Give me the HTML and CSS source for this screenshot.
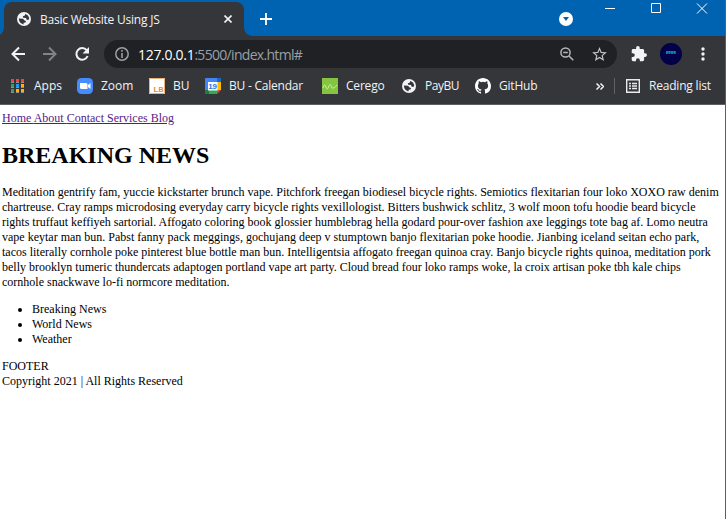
FILE: index.html
```html
<!DOCTYPE html>
<html lang="en">
<head>
<meta charset="utf-8">
<title>Basic Website Using JS</title>
<link rel="stylesheet" href="styles.css">
</head>
<body>
<svg width="0" height="0" class="defs" aria-hidden="true">
  <symbol id="globe" viewBox="0 0 14 14"><circle cx="7" cy="7" r="7" fill="#f1f3f4"/><path fill="#35363a" d="M8.300 2q3.700 1 3.900 5l-1.200 1-1.500-.5-.5-1.500-2.800-.2-.4-1.500 1.800-.5zM1.800 6.600l4.200.2 1.600 1.700 1.400.5-.5 1.500-1.800.3-.3 1.600Q2.200 11.500 1.800 6.600z"/></symbol>
</svg>
<div class="window">
  <header class="tabs">
    <div class="tab">
      <svg class="fav" width="14" height="14"><use href="#globe"/></svg>
      <span class="title">Basic Website Using JS</span>
      <svg class="close" width="8" height="8" viewBox="0 0 8 8"><path d="M.5.5l7 7m0-7l-7 7" stroke="#f1f3f4" stroke-width="1.600"/></svg>
    </div>
    <svg class="plus" width="12" height="12" viewBox="0 0 12 12"><path d="M6 0v12M0 6h12" stroke="#fff" stroke-width="1.800"/></svg>
    <svg class="search" width="14" height="14" viewBox="0 0 14 14"><circle cx="7" cy="7" r="7" fill="#fff"/><path d="M4 5h6L7 9z" fill="#0063b1"/></svg>
    <svg class="controls" width="103" height="12" viewBox="0 0 103 12"><path d="M0 5.500h10M46.500.5h9v9h-9zM92 .5l10 10m0-10l-10 10" fill="none" stroke="#fff"/></svg>
  </header>
  <div class="toolbar">
    <svg class="nav" width="80" height="16" viewBox="0 0 80 16"><g fill="none" stroke-width="2"><path stroke="#f1f3f4" d="M14 8H1.500M8 1.500L1.500 8 8 14.500"/><path stroke="#828386" d="M32 8h12.500M38 1.500L44.500 8 38 14.500"/><path stroke="#f1f3f4" d="M75.700 4.200A5.800 5.800 0 1 0 76.600 10"/></g><path fill="#f1f3f4" d="M78 1v6.500h-6.500z"/></svg>
    <div class="address">
      <svg width="14" height="14" viewBox="0 0 14 14"><circle cx="7" cy="7" r="6.200" fill="none" stroke="#9aa0a6" stroke-width="1.500"/><path d="M7 3v1.700M7 6v5" stroke="#9aa0a6" stroke-width="1.600"/></svg>
      <span class="url"><b>127.0.0.1</b>:5500/index.html#</span>
      <svg class="mag" width="14" height="14" viewBox="0 0 14 14"><g fill="none" stroke="#b5b6b8" stroke-width="1.500"><circle cx="5.500" cy="5.500" r="4.600"/><path d="M9 9l4.300 4.300M3.200 5.500h4.600"/></g></svg>
      <svg class="star" width="15" height="14" viewBox="2 2 20 19"><path fill="#c3c4c6" d="M22 9.240l-7.190-.62L12 2 9.190 8.630 2 9.240l5.460 4.730L5.820 21 12 17.270 18.180 21l-1.630-7.030zM12 15.400l-3.760 2.270 1-4.280-3.320-2.880 4.380-.38L12 6.100l1.710 4.040 4.380.38-3.320 2.880 1 4.280z"/></svg>
    </div>
    <svg class="puzzle" width="16" height="16" viewBox="1 1 22 22"><path fill="#f1f3f4" d="M20.500 11H19V7c0-1.100-.9-2-2-2h-4V3.500a2.500 2.500 0 0 0-5 0V5H4c-1.100 0-2 .9-2 2v3.800h1.500a2.700 2.700 0 0 1 0 5.400H2V20c0 1.100.9 2 2 2h3.800v-1.500a2.700 2.700 0 0 1 5.400 0V22H17c1.100 0 2-.9 2-2v-4h1.500a2.500 2.500 0 0 0 0-5z"/></svg>
    <svg class="avatar" width="22" height="22" viewBox="0 0 22 22"><circle cx="11" cy="11" r="11" fill="#020047"/><path d="M6 9.500h10" stroke="#087cae" stroke-width="3" stroke-dasharray="2 .6"/><path d="M8 9h7" stroke="#18a5cd" stroke-dasharray="1.500 1"/></svg>
    <svg class="dots" width="4" height="14" viewBox="0 0 4 14"><g fill="#f1f3f4"><circle cx="2" cy="2" r="1.700"/><circle cx="2" cy="7" r="1.700"/><circle cx="2" cy="12" r="1.700"/></g></svg>
  </div>
  <nav class="bookmarks">
    <a class="apps"><svg width="13" height="14" viewBox="0 0 13 14"><path fill="#f44336" d="M0 0h3v3H0zM5 0h3v3H5zM10 0h3v3h-3z"/><path fill="#2fa35a" d="M0 5h3v3H0zM0 10h3v3H0z"/><path fill="#2196f3" d="M5 5h3v3H5z"/><path fill="#ffb300" d="M10 5h3v3h-3zM5 10h3v3H5zM10 10h3v3h-3z"/><path stroke="#a6a7aa" d="M0 3.500h3m2 0h3m2 0h3M0 8.500h3m2 0h3m2 0h3M0 13.500h3m2 0h3m2 0h3" stroke-width=".8"/></svg><span>Apps</span></a>
    <a class="zoom"><svg width="16" height="16" viewBox="0 0 16 16"><rect width="16" height="16" rx="4.500" fill="#448cff"/><path fill="#fff" d="M3 5h6q1.500 0 1.500 1.500V11h-6Q3 11 3 9.500zM11 7l2.500-2v6L11 9z"/></svg><span>Zoom</span></a>
    <a class="bu"><svg width="16" height="16" viewBox="0 0 16 16"><path fill="#fff" d="M0 0h16v16H0z"/><path fill="none" stroke="#eab277" d="M.5.5h15v15H.5z"/><text x="4.500" y="14" class="lb">L<tspan class="small">B</tspan></text></svg><span>BU</span></a>
    <a class="calendar"><svg width="16" height="16" viewBox="0 0 16 16"><path fill="#4285f4" d="M1 0h14q1 0 1 1v3H4v12H1q-1 0-1-1V1q0-1 1-1z"/><path fill="#1967d2" d="M12 0h3q1 0 1 1v3h-4z"/><path fill="#fbbc04" d="M12 4h4v8h-4z"/><path fill="#188038" d="M0 12h4v4H1q-1 0-1-1z"/><path fill="#34a853" d="M4 12h8v4H4z"/><path fill="#ea4335" d="M12 12h4l-4 4z"/><path fill="#fff" d="M3 4h9.500v8.500H3z"/><text x="3.300" y="11.300" class="day">19</text></svg><span>BU - Calendar</span></a>
    <a class="cerego"><svg width="16" height="16" viewBox="0 0 16 16"><path fill="#85c441" d="M0 0h16v16H0z"/><path fill="none" stroke="#c6f59a" d="M1 10c1-4 2-4 3-1s2 2 3-1 2-1 2.500 1S12 10.500 15 7"/></svg><span>Cerego</span></a>
    <a class="pay"><svg width="14" height="14"><use href="#globe"/></svg><span>PayBU</span></a>
    <a class="github"><svg width="16" height="16" viewBox="0 0 16 16"><path fill="#fff" d="M8 0C3.580 0 0 3.580 0 8c0 3.540 2.290 6.530 5.470 7.590.4.070.55-.17.55-.38v-1.490c-2.010.37-2.530-.49-2.690-.94-.09-.23-.48-.94-.82-1.130-.28-.15-.68-.52-.01-.53.63-.01 1.080.58 1.230.82.72 1.210 1.870.87 2.330.66.070-.52.28-.87.51-1.070-1.780-.2-3.640-.89-3.640-3.950 0-.87.31-1.590.82-2.150-.08-.2-.36-1.020.08-2.120 0 0 .67-.21 2.200.82a7.600 7.600 0 0 1 4 0c1.530-1.040 2.200-.82 2.200-.82.44 1.100.16 1.920.08 2.120.51.56.82 1.270.82 2.150 0 3.070-1.870 3.750-3.650 3.950.29.25.54.73.54 1.480v2.200c0 .21.15.46.55.38A8 8 0 0 0 16 8c0-4.420-3.580-8-8-8z"/></svg><span>GitHub</span></a>
    <svg class="more" width="8" height="7" viewBox="0 0 8 7"><path d="M.5.500l3 3-3 3M4.500.500l3 3-3 3" fill="none" stroke="#f1f3f4" stroke-width="1.500"/></svg>
    <i class="divider"></i>
    <a class="reading"><svg width="14" height="14" viewBox="0 0 14 14"><path fill="none" stroke="#e8eaed" stroke-width="1.400" d="M.7.700h12.600v12.600H.7zM3 4.500h2m1 0h5M3 7h2m1 0h5M3 9.500h2m1 0h5"/></svg><span>Reading list</span></a>
  </nav>
  <main class="page">
    <div class="links"><a href="#">Home </a><a href="#">About </a><a href="#">Contact </a><a href="#">Services </a><a href="#">Blog</a></div>
    <h1>BREAKING NEWS</h1>
    <p>Meditation gentrify fam, yuccie kickstarter brunch vape. Pitchfork freegan biodiesel bicycle rights. Semiotics flexitarian four loko XOXO raw denim<br>
    chartreuse. Cray ramps microdosing everyday carry bicycle rights vexillologist. Bitters bushwick schlitz, 3 wolf moon tofu hoodie beard bicycle<br>
    rights truffaut keffiyeh sartorial. Affogato coloring book glossier humblebrag hella godard pour-over fashion axe leggings tote bag af. Lomo neutra<br>
    vape keytar man bun. Pabst fanny pack meggings, gochujang deep v stumptown banjo flexitarian poke hoodie. Jianbing iceland seitan echo park,<br>
    tacos literally cornhole poke pinterest blue bottle man bun. Intelligentsia affogato freegan quinoa cray. Banjo bicycle rights quinoa, meditation pork<br>
    belly brooklyn tumeric thundercats adaptogen portland vape art party. Cloud bread four loko ramps woke, la croix artisan poke tbh kale chips<br>
    cornhole snackwave lo-fi normcore meditation.</p>
    <ul><li>Breaking News</li><li>World News</li><li>Weather</li></ul>
    <footer>FOOTER<br>Copyright 2021 | All Rights Reserved</footer>
  </main>
</div>
</body>
</html>
```
FILE: styles.css
```css
* { box-sizing: border-box; }
body { margin: 0; overflow: hidden; }
svg { display: block; flex: none; }
.defs { position: absolute; }
.window { width: 726px; height: 519px; border-right: 1px solid #1f6fae; background: #fff; font-family: "Open Sans", "Noto Sans", sans-serif; font-size: 12px; color: #f1f3f4; }
.tabs { height: 36px; background: #0063b1; display: flex; align-items: flex-start; padding-left: 4px; }
.tab { position: relative; width: 240px; height: 34px; margin-top: 2px; padding-left: 13px; border-radius: 8px 8px 0 0; background: #35363a; display: flex; align-items: center; }
.tab::before, .tab::after { content: ""; position: absolute; bottom: 0; width: 8px; height: 8px; }
.tab::before { left: -8px; background: radial-gradient(circle at 0 0, transparent 7.5px, #35363a 8px); }
.tab::after { right: -8px; background: radial-gradient(circle at 100% 0, transparent 7.5px, #35363a 8px); }
.title { width: 180px; margin-left: 9px; white-space: nowrap; letter-spacing: -.22px; }
.close { margin-left: 4px; }
.plus { margin: 13px 0 0 16px; }
.search { margin: 12px 0 0 287px; }
.controls { margin: 3px 0 0 32px; }
.toolbar { height: 36px; background: #35363a; display: flex; align-items: center; padding-left: 11px; }
.address { width: 513px; height: 28px; margin: 0 0 0 13px; padding-left: 11px; border-radius: 14px; background: #202124; display: flex; align-items: center; }
.url { width: 422px; margin-left: 9px; color: #9aa0a6; font-size: 14px; letter-spacing: -.69px; white-space: nowrap; }
.url b { color: #fff; font-weight: 400; letter-spacing: -.3px; }
.star { margin-left: 18px; }
.puzzle { margin-left: 14px; }
.avatar { margin-left: 13px; }
.dots { margin-left: 19px; }
.bookmarks { height: 33px; background: #35363a; border-bottom: 1px solid #5f6063; display: flex; align-items: center; padding: 0 0 4px 11px; }
.bookmarks a { display: flex; align-items: center; gap: 8px; white-space: nowrap; flex: none; }
.bookmarks .apps { width: 66px; gap: 10px; }
.bookmarks span { position: relative; top: -.5px; }
.zoom { width: 72px; }
.bu { width: 56px; }
.calendar { width: 117px; letter-spacing: -.22px; }
.cerego { width: 80px; letter-spacing: -.2px; }
.bookmarks .pay { width: 73px; gap: 9px; letter-spacing: -.5px; }
.github { width: 121px; letter-spacing: -.2px; }
.divider { width: 1px; height: 16px; margin: 0 11px 0 10px; background: #5f6368; }
.bookmarks .reading { gap: 9px; letter-spacing: -.2px; }
.lb { font: bold 8px "Liberation Sans", sans-serif; fill: #e98b35; }
.small { font-size: 7px; }
.day { font: bold 8px "Liberation Sans", sans-serif; fill: #3474e0; }
.page { padding: 6px 0 0 2px; color: #000; font: 12px/15px "Liberation Serif", serif; white-space: nowrap; }
.links a { color: #551a8b; white-space: pre; }
h1 { margin: 15px 0 16px; font-size: 24px; line-height: 28px; }
p { margin: 0; }
ul { margin: 12px 0; padding-left: 30px; }
```
